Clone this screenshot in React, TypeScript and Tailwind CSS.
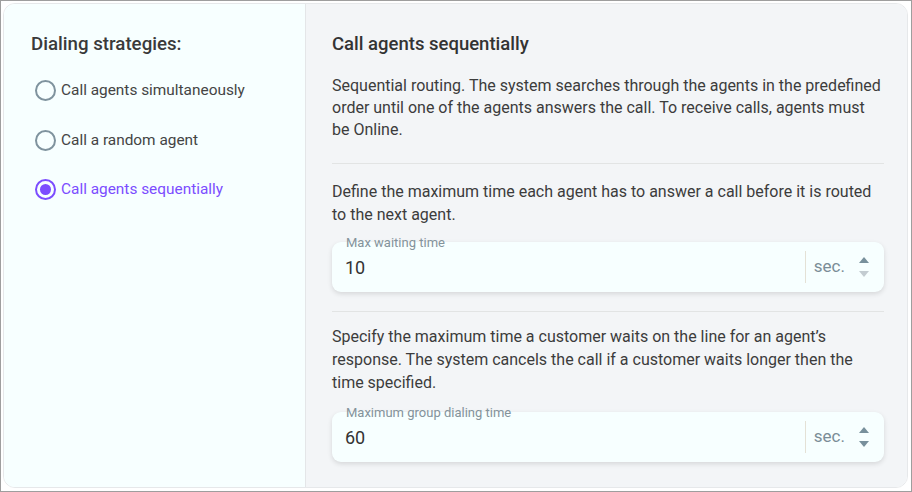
import React, { useState } from 'react';

const strategies = [
  { id: 'simultaneous', label: 'Call agents simultaneously' },
  { id: 'random', label: 'Call a random agent' },
  { id: 'sequential', label: 'Call agents sequentially' },
];

function Radio({ checked }: { checked: boolean }) {
  return (
    <span
      className={`flex h-[21px] w-[21px] shrink-0 items-center justify-center rounded-full border-2 ${
        checked ? 'border-[#7c4dff]' : 'border-[#7f939e]'
      }`}
    >
      {checked && <span className="h-[11px] w-[11px] rounded-full bg-[#7c4dff]" />}
    </span>
  );
}

function Spinner({ downDisabled }: { downDisabled?: boolean }) {
  return (
    <div className="flex flex-col items-center gap-[8px]">
      <svg width="10" height="6" viewBox="0 0 10 6">
        <path d="M5 0 L10 6 L0 6 Z" fill="#78909c" />
      </svg>
      <svg width="10" height="6" viewBox="0 0 10 6">
        <path d="M0 0 L10 0 L5 6 Z" fill={downDisabled ? '#c3ccd1' : '#78909c'} />
      </svg>
    </div>
  );
}

function NumberField({
  label,
  value,
  downDisabled,
}: {
  label: string;
  value: string;
  downDisabled?: boolean;
}) {
  return (
    <div className="relative flex h-[50px] items-center rounded-[9px] bg-[#f7ffff] shadow-[0_2px_5px_rgba(0,0,0,0.12)]">
      <span className="absolute left-[14px] top-[-6px] text-[13px] leading-[14px] text-[#84939b]">
        {label}
      </span>
      <span className="flex-1 pl-[13px] pt-[1px] text-[18px] text-[#333]">{value}</span>
      <div className="h-[32px] w-px bg-[#e4e1d6]" />
      <span className="ml-[8px] text-[17px] text-[#7b8d97]">sec.</span>
      <div className="ml-[14px] mr-[15px]">
        <Spinner downDisabled={downDisabled} />
      </div>
    </div>
  );
}

export default function App() {
  const [selected, setSelected] = useState('sequential');

  return (
    <div
      className="h-[492px] w-[912px] bg-white p-[2px] pb-[3px] pr-[3px] border border-[#9e9e9e]"
      style={{ fontFamily: 'Roboto, "Noto Sans", sans-serif' }}
    >
      <div className="flex h-full overflow-hidden rounded-[12px] border border-[#e6e8ea]">
        {/* Strategy list */}
        <div className="w-[301px] shrink-0 bg-[#f7ffff] pl-[27px] pt-[29px]">
          <h2 className="text-[18.7px] font-medium leading-[22px] text-[#3a3a3a]">Dialing strategies:</h2>
          <div className="mt-[25px] flex flex-col gap-[28.5px] pl-[4px]">
            {strategies.map((s) => (
              <button
                key={s.id}
                onClick={() => setSelected(s.id)}
                className="flex items-center gap-[5px] text-left"
              >
                <Radio checked={selected === s.id} />
                <span
                  className={`text-[15.4px] leading-[21px] ${
                    selected === s.id ? 'text-[#7c4dff]' : 'text-[#444]'
                  }`}
                >
                  {s.label}
                </span>
              </button>
            ))}
          </div>
        </div>

        {/* Details */}
        <div className="flex-1 border-l border-[#e4e6e8] bg-[#f3f5f7] pl-[26px] pr-[23px] pt-[29px]">
          <h2 className="text-[18.5px] font-medium leading-[22px] text-[#333]">Call agents sequentially</h2>
          <p className="mt-[20px] text-[16px] leading-[22px] text-[#3c3c3c]">
            Sequential routing. The system searches through the agents in the predefined order until one of
            the agents answers the call. To receive calls, agents must be Online.
          </p>
          <div className="mt-[22px] h-px bg-[#e2e4e4]" />
          <p className="mt-[17px] text-[16px] leading-[22.5px] text-[#3c3c3c]">
            Define the maximum time each agent has to answer a call before it is routed to the next agent.
          </p>
          <div className="mt-[16px]">
            <NumberField label="Max waiting time" value="10" downDisabled />
          </div>
          <div className="mt-[18.5px] h-px bg-[#e2e4e4]" />
          <p className="mt-[13.5px] text-[16px] leading-[23px] text-[#3c3c3c]">
            Specify the maximum time a customer waits on the line for an agent’s response. The system cancels
            the call if a customer waits longer then the time specified.
          </p>
          <div className="mt-[17.5px]">
            <NumberField label="Maximum group dialing time" value="60" />
          </div>
        </div>
      </div>
    </div>
  );
}
